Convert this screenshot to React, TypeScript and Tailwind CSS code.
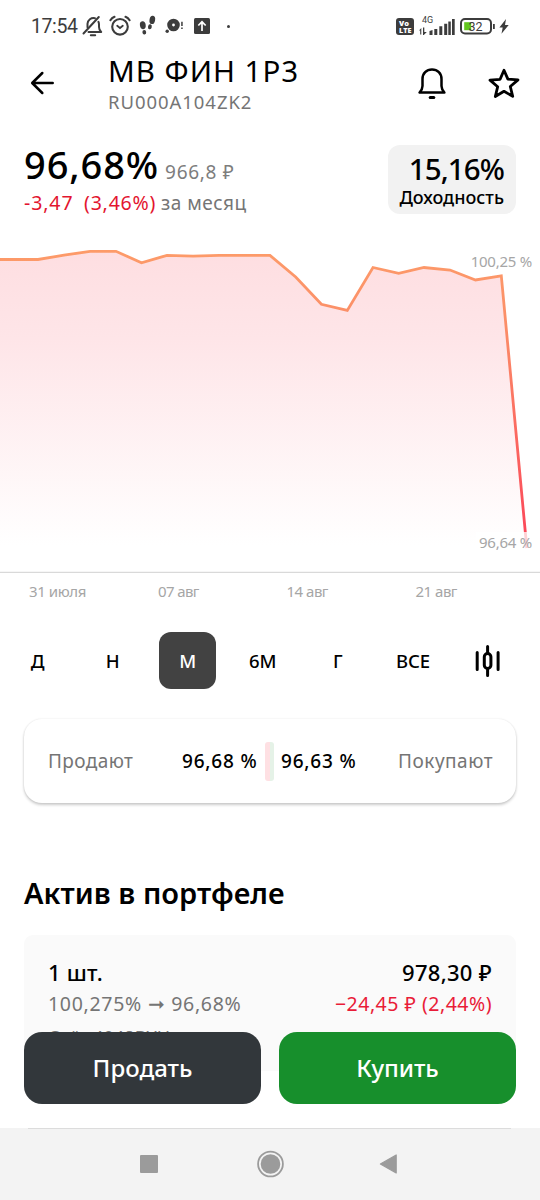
import type { ReactNode } from 'react';

const PERIODS = ['Д', 'Н', 'М', '6М', 'Г', 'ВСЕ'];

const POINTS: [number, number][] = [
  [-4, 259.5], [38, 259.5], [64, 255.2], [90, 251.3], [116, 251.3], [141.5, 262.8],
  [167, 255.3], [193, 256.2], [219, 255.4], [270, 255.4], [295.7, 277], [321.4, 304.3],
  [347.3, 310.4], [373, 267.5], [398.7, 273.3], [424, 267.5], [450, 270], [475.5, 280],
  [501.3, 275.8], [526.8, 548],
];

const CHART_TOP = 240;

function StatusBar() {
  return (
    <div className="flex h-[52px] shrink-0 items-center pl-[31px] text-[#3c3c3c]">
      <span className="w-[51px] whitespace-nowrap pt-px font-[Roboto] text-[19.5px] leading-none tracking-[-0.4px]">
        17:54
      </span>

      {/* muted bell */}
      <svg width="22" height="22" viewBox="0 0 22 22" fill="none" stroke="currentColor" strokeWidth="2" strokeLinecap="round" strokeLinejoin="round">
        <path d="M6.5 17h12.7c-1.6-1.4-2.2-2.8-2.2-5V9.5c0-1-.2-1.9-.6-2.7M13 3.2A6 6 0 0 0 5.5 8.8v3.4" />
        <path d="M1.5 18.5 16.8 2" />
        <path d="M8.8 20.3h4.4" />
      </svg>

      {/* alarm clock */}
      <svg className="ml-[5px]" width="22" height="22" viewBox="0 0 22 22" fill="none" stroke="currentColor" strokeWidth="2.1" strokeLinecap="round">
        <circle cx="11" cy="11.8" r="7.8" />
        <path d="M1.4 5.2C2.4 3.6 3.8 2.5 5.5 1.8M20.6 5.2C19.6 3.6 18.2 2.5 16.5 1.8" />
        <path d="M8.2 10.8l2.8 2.2 2.8-2.2" strokeWidth="1.8" />
      </svg>

      {/* footsteps */}
      <svg className="ml-[8px]" width="18" height="22" viewBox="0 0 18 22" fill="currentColor">
        <ellipse cx="3.8" cy="10.2" rx="2.9" ry="4" transform="rotate(-8 3.8 10.2)" />
        <ellipse cx="5.3" cy="17.3" rx="1.9" ry="2.2" transform="rotate(-8 5.3 17.3)" />
        <ellipse cx="13.3" cy="4.9" rx="2.8" ry="4.2" transform="rotate(10 13.3 4.9)" />
        <ellipse cx="10.9" cy="11.8" rx="1.9" ry="2.5" transform="rotate(12 10.9 11.8)" />
      </svg>

      {/* record with marks */}
      <svg className="ml-[8px]" width="20" height="22" viewBox="0 0 20 22" fill="currentColor">
        <path fillRule="evenodd" d="M8.5 3.7a6.3 6.3 0 1 1 0 12.6A6.3 6.3 0 0 1 8.5 3.7zm0 4.900a1.400 1.400 0 1 0 0 2.800 1.400 1.400 0 0 0 0-2.800z" />
        <circle cx="2.2" cy="16.2" r="1.7" />
        <path d="M16.2 6.8h1.5v4.2h-1.5zM16.2 12.5h1.5v1.5h-1.5z" />
      </svg>

      {/* upload */}
      <svg className="ml-[9px]" width="16" height="16" viewBox="0 0 16 16">
        <rect width="16" height="16" rx="1.5" fill="currentColor" />
        <path d="M8 13V4M4.3 7.5 8 3.8l3.7 3.7" fill="none" stroke="#fff" strokeWidth="1.7" />
      </svg>
      <span className="ml-[17px] size-[3px] rounded-full bg-[#3c3c3c]" />

      <div className="ml-auto flex items-center pr-[31px]">
        <svg width="18" height="17" viewBox="0 0 18 17">
          <rect width="18" height="17" rx="3" fill="#3c3c3c" />
          <text x="3" y="8" fontSize="7.5" fontWeight="800" fontFamily="Open Sans" fill="#fff">Vo</text>
          <text x="3" y="14.8" fontSize="7.2" fontWeight="800" fontFamily="Open Sans" fill="#fff">LTE</text>
        </svg>
        <svg className="ml-[5px]" width="36" height="22" viewBox="0 0 36 22" fill="currentColor">
          <text x="3" y="8.3" fontSize="9" fontFamily="Roboto">4G</text>
          <path d="M0 15.5l2.3-2.5V19.5H1.2v-4zM4 12.5h1.3v4.5h2.5l-3 3H4z" />
          <path d="M10.5 16l3-1v5h-3zM15.3 14h3v6h-3zM20.3 11.2h3V20h-3zM25.2 8.700h3V20h-3zM29.3 6.500h2.5V20h-2.5zM33 4h2.7v16H33z" />
        </svg>
        <svg className="ml-[5px]" width="36" height="17" viewBox="0 0 36 17">
          <rect x="1" y="1" width="30" height="14.5" rx="4" fill="none" stroke="#3c3c3c" strokeWidth="2" />
          <rect x="4.2" y="4.2" width="7" height="8" fill="#62c51c" />
          <path d="M33 6h1.8v5H33z" fill="#3c3c3c" />
          <text x="8.5" y="12.8" fontSize="12.5" fontFamily="Roboto" fill="#3c3c3c">32</text>
        </svg>
        <svg className="ml-[3px]" width="10" height="15" viewBox="0 0 10 15" fill="currentColor">
          <path d="M7 0 .4 8.6h3.3L2.5 14.7 9.7 6H6z" />
        </svg>
      </div>
    </div>
  );
}

function Header() {
  return (
    <header className="flex h-[92px] shrink-0 pl-[30px]">
      <svg className="mt-[19px]" width="24" height="24" viewBox="0 0 24 24" fill="none" stroke="#000" strokeWidth="2.5" strokeLinecap="round" strokeLinejoin="round">
        <path d="M22.7 12H2.5M12.3 2 2.2 12l10.1 10" />
      </svg>
      <div className="ml-[54px] flex flex-col whitespace-nowrap">
        <h1 className="pt-px text-[29.5px] font-[450] leading-[36px] tracking-[1px]">МВ ФИН 1Р3</h1>
        <span className="mt-[3px] text-[18.5px] leading-[20px] tracking-[0.95px] text-[#757575]">RU000A104ZK2</span>
      </div>
      <div className="ml-auto flex items-start pr-[20px]">
        <svg className="mt-[15px]" width="28" height="33" viewBox="0 0 28 33" fill="none" stroke="#000" strokeWidth="2.5" strokeLinecap="round" strokeLinejoin="round">
          <path d="M14 2.5c-5.6 0-9.500 4-9.500 9.500v7c0 2.500-.9 4.200-2.900 6.500h24.800c-2-2.300-2.900-4-2.900-6.500v-7c0-5.500-3.900-9.500-9.500-9.500z" />
          <path d="M12.2 30.6h3.6" strokeWidth="3" />
        </svg>
        <svg className="ml-[42px] mt-[15px]" width="32" height="32" viewBox="0 0 32 32" fill="none" stroke="#000" strokeWidth="2.8" strokeLinejoin="round">
          <path d="M16 3.2l3.9 8.900 10.100.8-7.700 6.600 2.400 9.800L16 24.300l-8.700 5.200 2.400-9.800L2 13.100l10.100-.8z" />
        </svg>
      </div>
    </header>
  );
}

function PriceSummary() {
  return (
    <section className="flex h-[96px] shrink-0 justify-between whitespace-nowrap px-6">
      <div>
        <div className="flex items-baseline">
          <span className="text-[38px] font-[550] leading-[41px] tracking-[0.9px]">96,68%</span>
          <span className="ml-[6px] text-[19px] leading-[24px] tracking-[0.7px] text-[#7d7d7d]">966,8 ₽</span>
        </div>
        <div className="mt-[6px] flex text-[19.5px] leading-[24px] text-[#e3152f]">
          <span className="w-[60px] tracking-[0.9px]">-3,47</span>
          <span className="w-[77px] tracking-[0.8px]">(3,46%)</span>
          <span className="text-[19px] tracking-[0.5px] text-[#757575]">за месяц</span>
        </div>
      </div>
      <div className="mt-px flex h-[69px] w-[128px] flex-col items-end rounded-[12px] bg-[#f2f2f2] pr-[12px]">
        <span className="mt-[7px] text-[29.5px] font-[550] leading-[34px] tracking-[-0.9px]">15,16%</span>
        <span className="text-[18px] font-medium leading-[23px]">Доходность</span>
      </div>
    </section>
  );
}

function Chart() {
  const line = POINTS.map(([x, y]) => `${x},${y - CHART_TOP}`).join(' ');
  return (
    <section className="relative shrink-0">
      <svg className="block" width="540" height="333" viewBox="0 0 540 333">
        <defs>
          <linearGradient id="stroke" gradientUnits="userSpaceOnUse" x1="0" y1="10" x2="0" y2="305">
            <stop offset="0" stopColor="#fd9b69" />
            <stop offset="0.25" stopColor="#fb8e68" />
            <stop offset="1" stopColor="#fb4458" />
          </linearGradient>
          <linearGradient id="area" gradientUnits="userSpaceOnUse" x1="0" y1="10" x2="0" y2="305">
            <stop offset="0" stopColor="#fedee1" />
            <stop offset="0.3" stopColor="#fee5e8" />
            <stop offset="1" stopColor="#ffffff" />
          </linearGradient>
        </defs>
        <polygon points={`${line} -4,308`} fill="url(#area)" />
        <polyline points={line} fill="none" stroke="url(#stroke)" strokeWidth="2.8" />
        <path d="M0 332.5h540" stroke="#d9d9d9" strokeWidth="1.5" />
      </svg>
      <span className="absolute right-[8px] top-[11px] bg-white/70 text-[15px] leading-[20px] tracking-[-0.25px] text-[#a6a6a6]">
        100,25 %
      </span>
      <span className="absolute right-[8px] top-[292px] bg-white/75 pl-[3px] text-[15px] leading-[21px] tracking-[-0.25px] text-[#a6a6a6]">
        96,64 %
      </span>
      <div className="flex h-[40px] pl-[29px] pt-[8px] text-[15px] leading-[20px] text-[#a6a6a6]">
        <span className="w-[129px] tracking-[-0.4px]">31 июля</span>
        <span className="w-[128.5px] tracking-[-0.6px]">07 авг</span>
        <span className="w-[129px] tracking-[-0.5px]">14 авг</span>
        <span className="tracking-[-0.5px]">21 авг</span>
      </div>
    </section>
  );
}

function PeriodTabs() {
  return (
    <nav className="mt-[19px] flex h-[57px] shrink-0 text-[18.5px] font-medium">
      {PERIODS.map(p => (
        <div key={p} className="flex w-[75.1px] items-center justify-center">
          <button
            className={`h-[57px] w-[57px] rounded-[12px] ${p === 'М' ? 'bg-[#424242] text-white' : 'text-black'}`}
          >
            {p}
          </button>
        </div>
      ))}
      <div className="flex w-[74px] items-center justify-center">
        <svg width="28" height="34" viewBox="0 0 28 34" fill="none" stroke="#000" strokeWidth="3" strokeLinecap="round">
          <path d="M3.2 8.5v17M24.1 8.500v17M13.6 2.500v6M13.6 25.500v6" />
          <rect x="10.300" y="9.5" width="6.6" height="15" rx="3.3" />
        </svg>
      </div>
    </nav>
  );
}

function OrderBook() {
  return (
    <section className="mx-6 mt-[30px] flex h-[84px] shrink-0 items-center whitespace-nowrap rounded-[18px] bg-white pl-[24px] pr-[23px] text-[19px] shadow-[0_2px_3px_rgba(0,0,0,0.2),0_0_2px_rgba(0,0,0,0.1)]">
      <span className="w-[134px] tracking-[0.4px] text-[#757575]">Продают</span>
      <span className="w-[76px] font-medium tracking-[0.8px]">96,68 %</span>
      <div className="ml-[7px] mr-[7px] flex h-[39px] w-[9px] overflow-hidden rounded-[3px]">
        <span className="flex-1 bg-[#fee0e3]" />
        <span className="flex-1 bg-[#e5f2e7]" />
      </div>
      <span className="font-medium tracking-[0.8px]">96,63 %</span>
      <span className="ml-auto tracking-[0.5px] text-[#757575]">Покупают</span>
    </section>
  );
}

function Position() {
  return (
    <section className="mt-[73px] shrink-0 whitespace-nowrap px-6">
      <h2 className="text-[29px] font-semibold leading-[34px] tracking-[0.05px]">Актив в портфеле</h2>
      <div className="mt-[25px] h-[136px] rounded-[9px] bg-[#fafafa] pl-[24px] pr-[24px] pt-[22px]">
        <div className="flex justify-between text-[22px] font-medium leading-[31px]">
          <span className="tracking-[0.2px]">1 шт.</span>
          <span className="tracking-[0.3px]">978,30 ₽</span>
        </div>
        <div className="flex justify-between text-[19.5px] leading-[32px]">
          <span className="tracking-[0.7px] text-[#757575]">100,275% ➞ 96,68%</span>
          <span className="tracking-[0.5px] text-[#e91c38]">−24,45 ₽ (2,44%)</span>
        </div>
        <div className="text-[18px] leading-[34px] tracking-[0.1px] text-[#757575]">Счёт 4048BYH</div>
      </div>
    </section>
  );
}

function ActionButton({ className, children }: { className: string; children: ReactNode }) {
  return (
    <button className={`h-[72px] flex-1 rounded-[18px] text-[24px] font-medium text-white ${className}`}>
      {children}
    </button>
  );
}

function NavigationBar() {
  return (
    <div className="h-[72px] bg-[#f3f3f3]">
      <div className="ml-[28px] mr-[29px] h-px bg-[#dcdcdc]" />
      <div className="flex h-[70px] items-center pl-[140px]">
        <span className="size-[18px] rounded-[1px] bg-[#9b9b9b]" />
        <svg className="ml-[98px]" width="28" height="28" viewBox="0 0 28 28">
          <circle cx="14.5" cy="14" r="12.4" fill="none" stroke="#9b9b9b" strokeWidth="1.8" />
          <circle cx="14.5" cy="14" r="9.8" fill="#9b9b9b" />
        </svg>
        <svg className="ml-[95px]" width="18" height="20" viewBox="0 0 18 20">
          <path d="M17.2 1v18L1.4 10z" fill="#9b9b9b" stroke="#9b9b9b" strokeWidth="1.2" strokeLinejoin="round" />
        </svg>
      </div>
    </div>
  );
}

export default function App() {
  return (
    <div className="relative flex h-[1200px] w-[540px] flex-col overflow-hidden bg-white font-['Noto_Sans',sans-serif] text-black">
      <StatusBar />
      <Header />
      <PriceSummary />
      <Chart />
      <PeriodTabs />
      <OrderBook />
      <Position />

      {/* pinned over the scrolled content */}
      <div className="absolute inset-x-0 bottom-0">
        <div className="flex gap-[18px] px-6 pb-6">
          <ActionButton className="bg-[#32373b]">Продать</ActionButton>
          <ActionButton className="bg-[#178f2c] tracking-[-0.1px]">Купить</ActionButton>
        </div>
        <NavigationBar />
      </div>
    </div>
  );
}
